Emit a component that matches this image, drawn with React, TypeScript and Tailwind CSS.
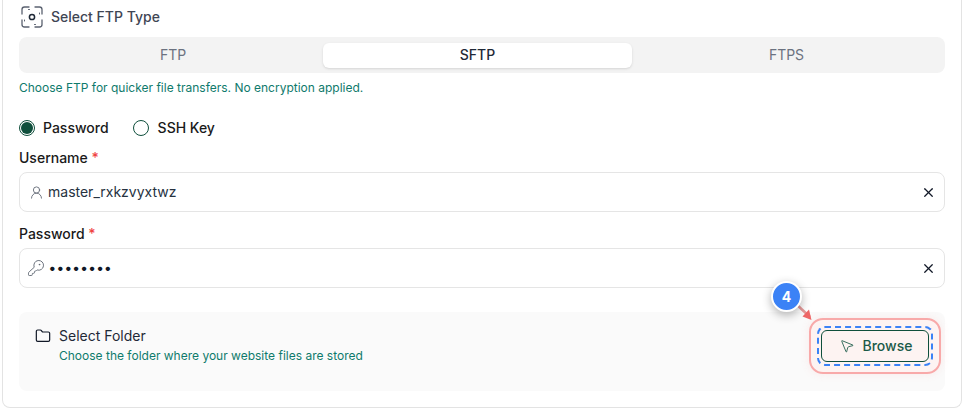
import { Folder, KeyRound, MousePointer2, UserRound, X } from 'lucide-react';

function FtpIcon() {
  return (
    <svg width="24" height="24" viewBox="0 0 24 24" fill="none" stroke="#5b6270" strokeWidth="1.3" strokeLinecap="round">
      <path d="M2 9V4.500A2.500 2.500 0 0 1 4.500 2H9" />
      <path d="M15 2h4.500A2.500 2.500 0 0 1 22 4.500V9" />
      <path d="M2 15v4.500A2.500 2.500 0 0 0 4.500 22H9" />
      <path d="M15 22h4.500A2.500 2.500 0 0 0 22 19.500V15" />
      <circle cx="12" cy="12" r="2.600" strokeWidth="1.500" stroke="#1f2937" />
      <path d="M8.500 4.500h1M14.500 19.500h1M4.500 15v1M19.500 8v1" strokeWidth="1" />
    </svg>
  );
}

function Field({ label, icon, children }: { label: string; icon: React.ReactNode; children: React.ReactNode }) {
  return (
    <div>
      <div className="text-sm font-medium leading-5 text-[#1a1a1a]">
        {label} <span className="text-[#ef4444]">*</span>
      </div>
      <div className="mt-1 flex h-10 items-center rounded-lg border border-[#e5e5e5] bg-white pl-[7px] pr-[8px]">
        <span className="flex w-[18px] justify-center text-[#5f6672]">{icon}</span>
        <div className="ml-[3px] flex-1 text-sm text-[#26323f]">{children}</div>
        <X size={15} strokeWidth={2} className="text-[#111827]" />
      </div>
    </div>
  );
}

export default function App() {
  return (
    <div className="h-[420px] w-[970px] overflow-hidden bg-white font-['Inter',sans-serif]">
      <div className="ml-[2px] h-[408px] w-[960px] rounded-b-lg border-x border-b border-[#e3e3e3] px-4">
        {/* Type header */}
        <div className="flex items-center gap-[7px] pl-[1px] pt-[5px]">
          <FtpIcon />
          <span className="text-sm font-medium text-[#3f4654]">Select FTP Type</span>
        </div>

        {/* Tabs */}
        <div className="mt-[8px] flex h-[36px] items-center rounded-lg bg-[#f3f3f3] pl-[6px] text-sm text-[#6b7280]">
          <div className="w-[298px] pr-[2px] text-center">FTP</div>
          <div className="flex h-[25px] w-[309px] items-center justify-center rounded-md bg-white font-medium text-[#1f2937] shadow-sm">SFTP</div>
          <div className="w-[309px] text-center">FTPS</div>
        </div>
        <p className="mt-[7px] text-xs leading-[15px] text-[#0f7a6c]">Choose FTP for quicker file transfers. No encryption applied.</p>

        {/* Auth radios */}
        <div className="mt-[23px] flex h-5 items-center text-sm font-medium text-[#1a1a1a]">
          <span className="flex h-4 w-4 items-center justify-center rounded-full border border-[#0f4f3c]">
            <span className="h-3 w-3 rounded-full bg-[#0f4f3c]" />
          </span>
          <span className="ml-2">Password</span>
          <span className="ml-[24px] h-4 w-4 rounded-full border border-[#0f4f3c]" />
          <span className="ml-[9px]">SSH Key</span>
        </div>

        <div className="mt-[10px] flex flex-col gap-3">
          <Field label="Username" icon={<UserRound size={15} strokeWidth={1.4} />}>master_rxkzvyxtwz</Field>
          <Field label="Password" icon={<KeyRound size={18} strokeWidth={1.2} />}>
            <span className="ml-[1px] text-sm font-bold tracking-[1.3px] text-[#111827]">••••••••</span>
          </Field>
        </div>

        {/* Folder panel */}
        <div className="relative mt-6 flex h-[79px] items-start justify-between rounded-lg bg-[#fafafa] pl-[16px] pr-[16px] pt-[15px]">
          <div className="flex items-start gap-[8px]">
            <Folder size={16} strokeWidth={1.8} className="mt-[1px] text-[#111827]" />
            <div>
              <div className="text-sm leading-[18px] text-[#1f2937]">Select Folder</div>
              <div className="mt-[3px] text-xs leading-[15px] text-[#0f7a6c]">Choose the folder where your website files are stored</div>
            </div>
          </div>

          {/* Highlighted button */}
          <div className="relative -mr-[12px] -mt-[9px] flex h-[56px] w-[132px] items-center justify-center rounded-[14px] border-2 border-[#f8a9a9] bg-[#fdf3f2] shadow-[0_0_10px_rgba(248,113,113,0.12)]">
            <div className="flex h-[40px] w-[116px] items-center justify-center rounded-lg border-2 border-dashed border-[#3b82f6]">
              <button className="flex h-[32px] w-[108px] items-center justify-center gap-[8px] rounded-md border border-[#0f4f3c] pl-[1px] text-sm font-medium text-[#1b5a48]">
                <MousePointer2 size={16} strokeWidth={1.3} />
                Browse
              </button>
            </div>
          </div>

          {/* Step badge with arrow */}
          <svg className="absolute left-[774px] top-[-10px]" width="40" height="30" viewBox="0 0 40 30" fill="none">
            <path d="M2 1 L17 15" stroke="#e59a9a" strokeWidth="2.500" />
            <path d="M18.500 19 L9.500 15.500 L16 8.500 Z" transform="translate(0,-1)" fill="#ee6666" />
          </svg>
          <div className="absolute left-[752px] top-[-31px] flex h-[31px] w-[31px] items-center justify-center rounded-full border-2 border-white bg-[#3b82f6] text-sm font-bold text-white shadow-[0_3px_10px_rgba(0,0,0,0.3)]">4</div>
        </div>
      </div>
    </div>
  );
}
